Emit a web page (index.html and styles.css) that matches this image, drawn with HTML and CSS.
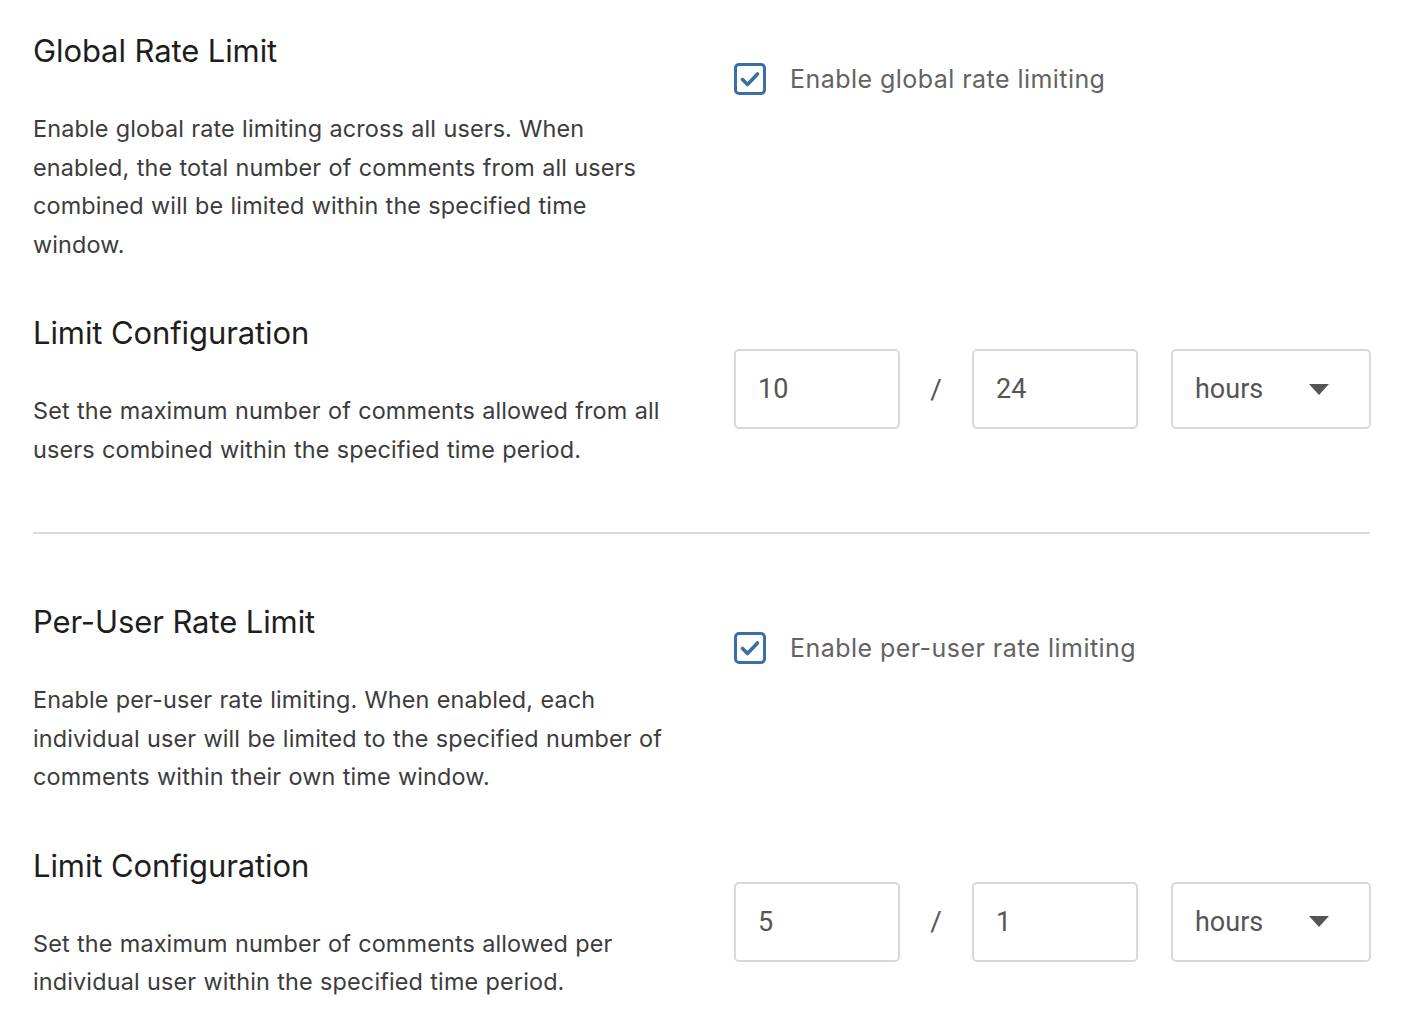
FILE: index.html
```html
<!DOCTYPE html>
<html lang="en">
<head>
<meta charset="utf-8">
<title>Rate Limit Settings</title>
<link rel="stylesheet" href="styles.css">
</head>
<body>
<main class="page">
  <section class="group">
    <div class="row row-toggle">
      <div class="info">
        <h2 class="title">Global Rate Limit</h2>
        <p class="desc">Enable global rate limiting across all users. When<br>enabled, the total number of comments from all users<br>combined will be limited within the specified time<br>window.</p>
      </div>
      <div class="control">
        <label class="check">
          <span class="box"><svg viewBox="0 0 32 32" width="32" height="32"><rect x="1.5" y="1.5" width="29" height="29" rx="3.5" fill="#fff" stroke="#3a6ea5" stroke-width="3"/><path d="M8.5 16.5 L13.5 21.5 L23.5 11" fill="none" stroke="#3a6ea5" stroke-width="3.6" stroke-linecap="round" stroke-linejoin="round"/></svg></span>
          <span class="check-label">Enable global rate limiting</span>
        </label>
      </div>
    </div>
    <div class="row row-limit">
      <div class="info">
        <h2 class="title">Limit Configuration</h2>
        <p class="desc">Set the maximum number of comments allowed from all<br>users combined within the specified time period.</p>
      </div>
      <div class="control">
        <div class="limit">
          <div class="field">10</div>
          <span class="slash">/</span>
          <div class="field">24</div>
          <div class="select">hours<span class="caret"></span></div>
        </div>
      </div>
    </div>
  </section>
  <hr class="divider">
  <section class="group">
    <div class="row row-toggle">
      <div class="info">
        <h2 class="title">Per-User Rate Limit</h2>
        <p class="desc">Enable per-user rate limiting. When enabled, each<br>individual user will be limited to the specified number of<br>comments within their own time window.</p>
      </div>
      <div class="control">
        <label class="check">
          <span class="box"><svg viewBox="0 0 32 32" width="32" height="32"><rect x="1.5" y="1.5" width="29" height="29" rx="3.5" fill="#fff" stroke="#3a6ea5" stroke-width="3"/><path d="M8.5 16.5 L13.5 21.5 L23.5 11" fill="none" stroke="#3a6ea5" stroke-width="3.6" stroke-linecap="round" stroke-linejoin="round"/></svg></span>
          <span class="check-label">Enable per-user rate limiting</span>
        </label>
      </div>
    </div>
    <div class="row row-limit">
      <div class="info">
        <h2 class="title">Limit Configuration</h2>
        <p class="desc">Set the maximum number of comments allowed per<br>individual user within the specified time period.</p>
      </div>
      <div class="control">
        <div class="limit">
          <div class="field">5</div>
          <span class="slash">/</span>
          <div class="field">1</div>
          <div class="select">hours<span class="caret"></span></div>
        </div>
      </div>
    </div>
  </section>
</main>
</body>
</html>
```
FILE: styles.css
```css
* { box-sizing: border-box; }
html, body { margin: 0; padding: 0; background: #fff; }
body { font-family: Inter, "Noto Sans", sans-serif; color: #1e1e1e; }
.page { padding: 31px 32px 0 33px; }
.row {
  display: grid;
  grid-template-columns: 667px 1fr;
  column-gap: 34px;
}
.title {
  margin: 0;
  font-size: 31px;
  font-weight: 400;
  line-height: 40px;
  color: #1e1e1e;
  letter-spacing: -0.1px;
}
.desc {
  margin: 39px 0 0;
  font-size: 23.4px;
  line-height: 38.5px;
  color: #3c3c3c;
  letter-spacing: 0.15px;
  word-spacing: 0.5px;
}
.row-limit { margin-top: 49px; }
.control { padding-top: 32px; }
.row-limit .control { padding-top: 36px; }
.group + .divider + .group .row-toggle .control { padding-top: 30px; }
.check { display: flex; align-items: center; gap: 24px; }
.box { width: 32px; height: 32px; display: block; }
.box svg { display: block; }
.check-label { font-size: 25px; line-height: 32px; color: #636363; letter-spacing: 0.45px; }
.limit { display: flex; align-items: center; }
.field, .select {
  height: 80px;
  border: 2px solid #d9d9d9;
  border-radius: 5px;
  display: flex;
  align-items: center;
  font-family: Roboto, sans-serif;
  font-size: 27px;
  color: #555;
}
.field { width: 166px; padding-left: 22px; }
.slash {
  width: 72px;
  text-align: center;
  font-family: Roboto, sans-serif;
  font-size: 28px;
  color: #555;
}
.select {
  width: 200px;
  margin-left: 33px;
  padding-left: 22px;
  justify-content: space-between;
  padding-right: 40px;
}
.caret {
  width: 0; height: 0;
  border-left: 10px solid transparent;
  border-right: 10px solid transparent;
  border-top: 11px solid #555;
}
.divider {
  margin: 63px 0 0;
  border: 0;
  border-top: 2px solid #dcdcdc;
}
.group + .divider + .group { padding-top: 68px; }
```
